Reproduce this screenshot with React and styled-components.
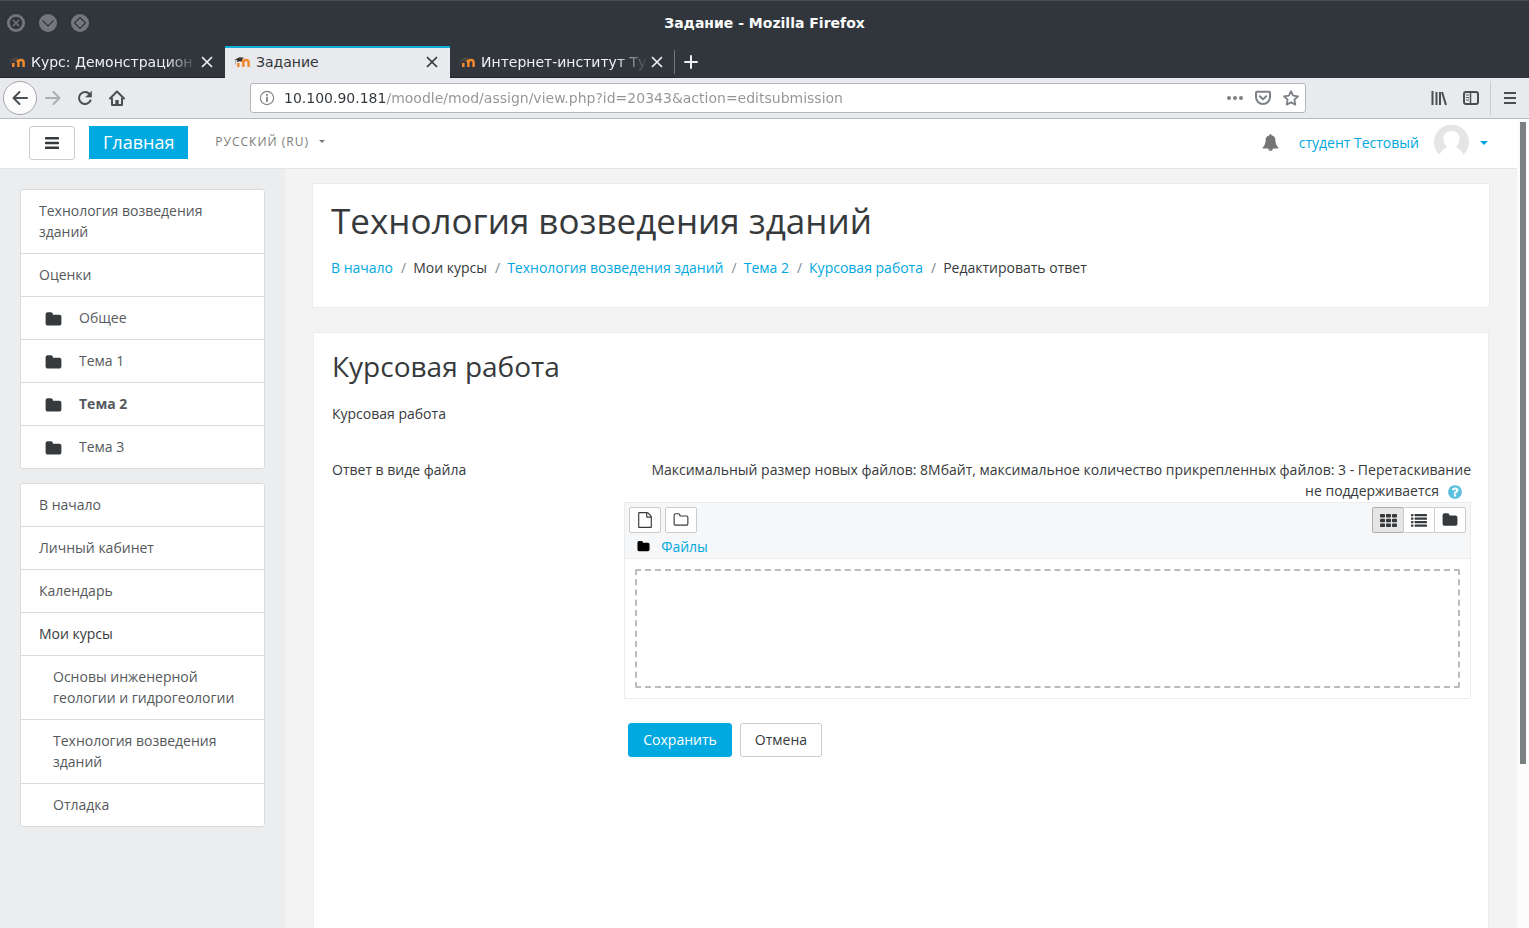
import React from "react";
import styled, { createGlobalStyle } from "styled-components";

const GlobalStyle = createGlobalStyle`
    * {
        box-sizing: border-box;
    }

    body {
        margin: 0;
        font-family: "Open Sans", "Noto Sans", sans-serif;
        font-size: 14px;
        line-height: 21px;
        color: #373a3c;
    }

    button, input {
        font: inherit;
        color: inherit;
    }

    a {
        color: #00a8df;
        text-decoration: none;
    }

    svg {
        display: block;
        flex: none;
    }
`;

const FA_PATHS = {
    folder: "M1728 608v704q0 92-66 158t-158 66h-1216q-92 0-158-66t-66-158v-960q0-92 66-158t158-66h320q92 0 158 66t66 158v32h672q92 0 158 66t66 158z",
    folderOpen: "M1600 1312v-704q0-40-28-68t-68-28h-704q-40 0-68-28t-28-68v-64q0-40-28-68t-68-28h-320q-40 0-68 28t-28 68v960q0 40 28 68t68 28h1216q40 0 68-28t28-68zm128-704v704q0 92-66 158t-158 66h-1216q-92 0-158-66t-66-158v-960q0-92 66-158t158-66h320q92 0 158 66t66 158v32h672q92 0 158 66t66 158z",
    file: "M1596 380q28 28 48 76t20 88v1152q0 40-28 68t-68 28h-1344q-40 0-68-28t-28-68v-1600q0-40 28-68t68-28h896q40 0 88 20t76 48zm-444-244v376h376q-10-29-22-41l-313-313q-12-12-41-22zm384 1528v-1024h-416q-40 0-68-28t-28-68v-416h-768v1536h1280z",
    bell: "M912 1696q0-16-16-16-59 0-101.500-42.500t-42.500-101.500q0-16-16-16t-16 16q0 73 51.500 124.500t124.500 51.500q16 0 16-16zm816-288q0 52-38 90t-90 38h-448q0 106-75 181t-181 75-181-75-75-181h-448q-52 0-90-38t-38-90q50-42 91-88t85-119.500 74.500-158.500 50-206 19.500-260q0-152 117-282.500t307-158.500q-8-19-8-39 0-40 28-68t68-28 68 28 28 68q0 20-8 39 190 28 307 158.500t117 282.500q0 139 19.500 260t50 206 74.500 158.500 85 119.500 91 88z",
    question: "M1024 1376v-192q0-14-9-23t-23-9h-192q-14 0-23 9t-9 23v192q0 14 9 23t23 9h192q14 0 23-9t9-23zm256-672q0-88-55.500-163t-138.500-116-170-41q-243 0-371 213-15 24 8 42l132 100q7 6 19 6 16 0 25-12 53-68 86-92 34-24 86-24 48 0 85.500 26t37.500 59q0 38-20 61t-68 45q-63 28-115.500 86.500t-52.500 125.500v36q0 14 9 23t23 9h192q14 0 23-9t9-23q0-19 21.500-49.500t54.500-49.500q32-18 49-28.500t46-35 44.500-48 28-60.500 12.500-81zm384 192q0 209-103 385.500t-279.500 279.500-385.500 103-385.500-103-279.500-279.500-103-385.500 103-385.500 279.500-279.500 385.500-103 385.500 103 279.500 279.500 103 385.500z",
};

const Fa = ({ name, size = 16 }) => (
    <svg width={size} height={size} viewBox="0 0 1792 1792" fill="currentColor" aria-hidden="true">
        <path d={FA_PATHS[name]} />
    </svg>
);

const Stroke = ({ children, width = 2, size = 16 }) => (
    <svg width={size} height={size} viewBox="0 0 16 16" fill="none" stroke="currentColor" strokeWidth={width} strokeLinecap="round" strokeLinejoin="round" aria-hidden="true">
        {children}
    </svg>
);

const BarsIcon = () => (
    <svg width="14" height="12" viewBox="0 0 14 12" fill="currentColor" aria-hidden="true">
        <rect y="0" width="14" height="2.400" rx=".4" />
        <rect y="4.800" width="14" height="2.400" rx=".4" />
        <rect y="9.600" width="14" height="2.400" rx=".4" />
    </svg>
);

const GridIcon = () => (
    <svg width="17" height="13" viewBox="0 0 17 13" fill="currentColor" aria-hidden="true">
        {[0, 6, 12].map((x) => [0, 4.75, 9.5].map((y) => (
            <rect key={`${x}-${y}`} x={x} y={y} width="5" height="3.500" rx=".8" />
        )))}
    </svg>
);

const ListIcon = () => (
    <svg width="16" height="13" viewBox="0 0 16 13" fill="currentColor" aria-hidden="true">
        {[0, 3.5, 7, 10.5].map((y) => (
            <g key={y}>
                <rect y={y} width="2.400" height="2.200" rx=".4" />
                <rect x="3.600" y={y} width="12.400" height="2.200" rx=".4" />
            </g>
        ))}
    </svg>
);

const MoodleIcon = ({ dark }) => (
    <svg width="16" height="16" viewBox="0 0 16 16" aria-hidden="true">
        <path d="M4.300 13V9M9.400 13V8.600Q9.400 6.400 6.800 6.400M9.400 13V8.600Q9.400 6 12 6Q14.600 6 14.600 8.600V13" fill="none" stroke="#f3892b" strokeWidth="2.500" />
        <path d="M.5 5.800L5.500 3.200L10 3.800L8 5.600L7.600 7.600Q5.500 6.600 3.400 8.200L3 6Z" fill={dark ? "#4a4442" : "#35322f"} />
        <path d="M1.600 5.800Q2 8 1.200 10.500" fill="none" stroke={dark ? "#594d45" : "#8a7f78"} strokeWidth=".7" />
    </svg>
);

const CloseIcon = () => (
    <Stroke width={1.7} size={16}>
        <path d="M3.500 3.500l9 9M12.500 3.500l-9 9" />
    </Stroke>
);

const WINDOW_BUTTONS = [
    { label: "Закрыть", art: <><circle cx="9" cy="9" r="6.200" fill="#31363c" /><path d="M6 6l6 6M12 6l-6 6" stroke="#74787c" strokeWidth="1.500" /></> },
    { label: "Свернуть", art: <path d="M3.500 6.500l5.500 5.500l5.500-5.500" stroke="#31363c" /> },
    { label: "Развернуть", art: <path d="M9 3.500l5.500 5.500l-5.500 5.500l-5.500-5.500z" stroke="#31363c" /> },
];

const TABS = [
    { title: "Курс: Демонстрацион" },
    { title: "Задание", active: true },
    { title: "Интернет-институт Ту" },
];

const COURSE_LINKS = [
    { text: "Технология возведения зданий" },
    { text: "Оценки" },
    { text: "Общее", folder: true },
    { text: "Тема 1", folder: true },
    { text: "Тема 2", folder: true, bold: true },
    { text: "Тема 3", folder: true },
];

const SITE_LINKS = [
    { text: "В начало" },
    { text: "Личный кабинет" },
    { text: "Календарь" },
    { text: "Мои курсы", dark: true },
    { text: "Основы инженерной геологии и гидрогеологии", nested: true },
    { text: "Технология возведения зданий", nested: true },
    { text: "Отладка", nested: true },
];

const CRUMBS = [
    { text: "В начало", link: true },
    { text: "Мои курсы" },
    { text: "Технология возведения зданий", link: true },
    { text: "Тема 2", link: true },
    { text: "Курсовая работа", link: true },
    { text: "Редактировать ответ" },
];

const SideMenu = ({ links, label }) => (
    <MenuCard aria-label={label}>
        {links.map((link) => (
            <MenuLink key={link.text} href="#" $nested={link.nested} $bold={link.bold} $dark={link.dark}>
                {link.folder && <MenuIcon><Fa name="folder" size={17} /></MenuIcon>}
                <span>{link.text}</span>
            </MenuLink>
        ))}
    </MenuCard>
);

const BrowserChrome = () => (
    <Chrome>
        <TitleBar>
            <WindowButtons>
                {WINDOW_BUTTONS.map((b) => (
                    <PlainButton key={b.label} aria-label={b.label}>
                        <svg width="18" height="18" viewBox="0 0 18 18" fill="none" strokeWidth="1.200">
                            <circle cx="9" cy="9" r="9" fill="#74787c" />
                            {b.art}
                        </svg>
                    </PlainButton>
                ))}
            </WindowButtons>
            <WindowTitle>Задание - Mozilla Firefox</WindowTitle>
        </TitleBar>
        <TabStrip>
            {TABS.map((tab) => (
                <Tab key={tab.title} $active={tab.active}>
                    <MoodleIcon dark={!tab.active} />
                    <TabTitle $fade={!tab.active}>{tab.title}</TabTitle>
                    <PlainButton aria-label="Закрыть вкладку"><CloseIcon /></PlainButton>
                </Tab>
            ))}
            <NewTab aria-label="Новая вкладка">
                <Stroke><path d="M8 2v12M2 8h12" /></Stroke>
            </NewTab>
        </TabStrip>
        <NavBar>
            <NavGroup>
                <BackButton aria-label="Назад">
                    <Stroke><path d="M15 8H1.500M7.500 2L1.500 8l6 6" /></Stroke>
                </BackButton>
                <NavButton aria-label="Вперёд" $muted>
                    <Stroke><path d="M1 8h13.500M8.500 2l6 6l-6 6" /></Stroke>
                </NavButton>
                <NavButton aria-label="Обновить">
                    <Stroke>
                        <path d="M13.500 10.500A6 6 0 1 1 12.500 4" />
                        <path d="M14.500 1.500v5.500h-5.500z" fill="currentColor" strokeWidth=".6" />
                    </Stroke>
                </NavButton>
                <NavButton aria-label="Домой">
                    <Stroke>
                        <path d="M1 8.500L8 1.500l7 7M3 8.500V15h10V8.500" />
                        <path d="M8 14v-4" strokeWidth="3.400" strokeLinecap="butt" />
                    </Stroke>
                </NavButton>
            </NavGroup>
            <UrlBar>
                <Stroke width={1.1}>
                    <circle cx="8" cy="8" r="6.600" />
                    <path d="M8 7.500v3.800M8 4.700v.4" strokeWidth="1.800" />
                </Stroke>
                <UrlInput aria-label="Адрес" defaultValue="10.100.90.181/moodle/mod/assign/view.php?id=20343&action=editsubmission" />
                <PlainButton aria-label="Действия">
                    <svg width="16" height="16" viewBox="0 0 16 16" fill="currentColor"><circle cx="2" cy="8" r="2" /><circle cx="8" cy="8" r="2" /><circle cx="14" cy="8" r="2" /></svg>
                </PlainButton>
                <PlainButton aria-label="Pocket">
                    <Stroke><path d="M2 1.800h12q1 0 1 1V7a7 7 0 0 1-14 0V2.800q0-1 1-1zM4.800 6.200L8 9.400l3.200-3.200" /></Stroke>
                </PlainButton>
                <PlainButton aria-label="В закладки">
                    <Stroke width={1.8}><path d="M8 1.200l2.100 4.500 4.900.6-3.600 3.400.9 4.900L8 12.200l-4.300 2.400.9-4.900L1 6.300l4.900-.6z" /></Stroke>
                </PlainButton>
            </UrlBar>
            <ToolGroup>
                <PlainButton aria-label="Библиотека">
                    <Stroke><path d="M1.500 1v14M5.500 2v13M9 2v13M11 2l4 13" strokeLinecap="butt" /></Stroke>
                </PlainButton>
                <PlainButton aria-label="Боковая панель">
                    <Stroke><rect x="1" y="2" width="14" height="12" rx="2" /><path d="M7.500 2v12" strokeWidth="1.500" /><path d="M3.500 5h2M3.500 7.500h2M3.500 10h2" strokeWidth="1" /></Stroke>
                </PlainButton>
                <MenuButton aria-label="Меню">
                    <Stroke><path d="M2 3h12M2 8h12M2 13h12" strokeLinecap="butt" /></Stroke>
                </MenuButton>
            </ToolGroup>
        </NavBar>
    </Chrome>
);

const FileManager = () => (
    <Manager>
        <ManagerTop>
            <ManagerTools>
                <ToolButton aria-label="Добавить файл"><Fa name="file" size={16} /></ToolButton>
                <ToolButton aria-label="Создать папку"><Fa name="folderOpen" size={16} /></ToolButton>
                <ViewGroup>
                    <ViewButton aria-label="Значки" $active><GridIcon /></ViewButton>
                    <ViewButton aria-label="Список"><ListIcon /></ViewButton>
                    <ViewButton aria-label="Дерево"><Fa name="folder" size={16} /></ViewButton>
                </ViewGroup>
            </ManagerTools>
            <ManagerPath>
                <Fa name="folder" size={13} />
                <a href="#">Файлы</a>
            </ManagerPath>
        </ManagerTop>
        <DropZone />
    </Manager>
);

export default function App() {
    return (
        <Window>
            <GlobalStyle />
            <BrowserChrome />
            <Viewport>
                <Page>
                    <SiteHeader>
                        <Hamburger aria-label="Меню сайта"><BarsIcon /></Hamburger>
                        <HomeLink href="#">Главная</HomeLink>
                        <Language>Русский (ru)<Caret /></Language>
                        <UserMenu>
                            <BellButton aria-label="Уведомления"><Fa name="bell" size={17} /></BellButton>
                            <a href="#">студент Тестовый</a>
                            <AvatarButton aria-label="Меню пользователя">
                                <svg width="35" height="35" viewBox="0 0 35 35">
                                    <path d="M5.500 29.800A17.500 17.500 0 1 1 29.500 29.800Q27.500 24.500 22 22Q25.500 18.500 25.500 14Q25.500 6 17.500 6T9.500 14Q9.500 18.500 13 22Q7.500 24.500 5.500 29.800Z" fill="#e5e5e5" />
                                </svg>
                                <Caret $big />
                            </AvatarButton>
                        </UserMenu>
                    </SiteHeader>
                    <Body>
                        <Sidebar>
                            <SideMenu links={COURSE_LINKS} label="Курс" />
                            <SideMenu links={SITE_LINKS} label="Навигация" />
                        </Sidebar>
                        <Content>
                            <HeadCard>
                                <CourseTitle>Технология возведения зданий</CourseTitle>
                                <Crumbs>
                                    {CRUMBS.map((c) => (
                                        <li key={c.text}>{c.link ? <a href="#">{c.text}</a> : c.text}</li>
                                    ))}
                                </Crumbs>
                            </HeadCard>
                            <MainCard>
                                <TaskTitle>Курсовая работа</TaskTitle>
                                <Intro>Курсовая работа</Intro>
                                <FormRow>
                                    <LabelCol>Ответ в виде файла</LabelCol>
                                    <FieldCol>
                                        <Limits>
                                            Максимальный размер новых файлов: 8Мбайт, максимальное количество прикрепленных файлов: 3 - Перетаскивание не поддерживается
                                            <HelpButton aria-label="Справка"><Fa name="question" size={16} /></HelpButton>
                                        </Limits>
                                        <FileManager />
                                        <Actions>
                                            <SubmitButton $primary>Сохранить</SubmitButton>
                                            <SubmitButton>Отмена</SubmitButton>
                                        </Actions>
                                    </FieldCol>
                                </FormRow>
                            </MainCard>
                        </Content>
                    </Body>
                </Page>
                <ScrollTrack><ScrollThumb /></ScrollTrack>
            </Viewport>
        </Window>
    );
}

const Window = styled.div`
    display: flex;
    flex-direction: column;
    height: 100vh;
    overflow: hidden;
    background: #fff;
`;

const Chrome = styled.header`
    flex: none;
    font-family: "DejaVu Sans", sans-serif;
    font-size: 14px;
    line-height: 20px;
`;

const PlainButton = styled.button`
    display: flex;
    align-items: center;
    padding: 0;
    border: 0;
    background: none;
`;

const TitleBar = styled.div`
    display: grid;
    grid-template-columns: 1fr auto 1fr;
    align-items: center;
    height: 46px;
    padding: 0 7px 2px;
    border-top: 1px solid #474c52;
    background: #31363d;
    color: #fcfcfc;
`;

const WindowButtons = styled.div`
    display: flex;
    gap: 14px;
`;

const WindowTitle = styled.div`
    font-weight: bold;
`;

const TabStrip = styled.div`
    display: flex;
    height: 32px;
    background: #31363d;
    color: #eff0f1;
`;

const Tab = styled.div`
    display: flex;
    align-items: center;
    gap: 6px;
    width: 225px;
    padding: 0 10px 2px 9px;
    border-top: 2px solid ${(props) => (props.$active ? "#12aeda" : "transparent")};
    border-bottom: 1px solid ${(props) => (props.$active ? "#e9eaed" : "#1f2226")};
    background: ${(props) => (props.$active ? "#e9eaed" : "transparent")};
    color: ${(props) => (props.$active ? "#31363b" : "inherit")};
`;

const TabTitle = styled.span`
    flex: 1;
    min-width: 0;
    margin-right: -5px;
    overflow: hidden;
    white-space: nowrap;
    ${(props) => props.$fade && "mask-image: linear-gradient(to left, transparent, #000 32px);"}
`;

const NewTab = styled(PlainButton)`
    height: 24px;
    margin: 4px 0 0 -1px;
    padding-left: 8px;
    border-left: 1px solid #72767a;
`;

const NavBar = styled.div`
    display: flex;
    align-items: center;
    height: 41px;
    padding: 0 11px 0 3px;
    border-bottom: 1px solid #b7b9bc;
    background: #e9eaed;
    color: #494e53;
`;

const NavGroup = styled.div`
    display: flex;
    align-items: center;
    gap: 16px;
    width: 247px;
`;

const NavButton = styled(PlainButton)`
    color: ${(props) => (props.$muted ? "#acafb2" : "inherit")};
`;

const BackButton = styled(PlainButton)`
    justify-content: center;
    width: 34px;
    height: 34px;
    margin-right: -8px;
    border: 1px solid #a5a8ab;
    border-radius: 50%;
    background: #fcfcfc;
`;

const UrlBar = styled.div`
    display: flex;
    align-items: center;
    gap: 12px;
    flex: 1;
    height: 30px;
    padding: 0 6px 0 8px;
    border: 1px solid #b4b6b9;
    border-radius: 3px;
    background: #fff;
    color: #7d8185;
`;

const UrlInput = styled.input`
    flex: 1;
    min-width: 0;
    margin-left: -3px;
    padding: 0;
    border: 0;
    outline: 0;
    background: linear-gradient(90deg, #31363b 102px, #919497 102px);
    background-clip: text;
    -webkit-background-clip: text;
    color: transparent;
`;

const ToolGroup = styled.div`
    display: flex;
    align-items: center;
    gap: 16px;
    margin-left: 125px;
`;

const MenuButton = styled(PlainButton)`
    height: 34px;
    margin-left: -5px;
    padding-left: 11px;
    border-left: 1px solid #c8cacd;
`;

const Viewport = styled.div`
    display: flex;
    flex: 1;
    min-height: 0;
`;

const Page = styled.div`
    display: flex;
    flex-direction: column;
    flex: 1;
    min-width: 0;
    overflow: hidden;
`;

const ScrollTrack = styled.div`
    width: 12px;
    padding: 3px;
    background: #fcfcfc;
`;

const ScrollThumb = styled.div`
    height: 80%;
    background: #7b8083;
`;

const SiteHeader = styled.header`
    display: flex;
    align-items: center;
    flex: none;
    height: 50px;
    padding: 0 29px 2px 29px;
    border-bottom: 1px solid #e3e4e6;
    background: #fff;
`;

const Hamburger = styled.button`
    display: flex;
    align-items: center;
    justify-content: center;
    width: 46px;
    height: 34px;
    padding: 0;
    border: 1px solid #ccc;
    border-radius: 3px;
    background: #fff;
`;

const HomeLink = styled.a`
    margin: 0 27px 0 14px;
    padding: 6px 14px;
    background: #00a9e0;
    color: #fff;
    font-size: 18px;
`;

const Language = styled.button`
    display: flex;
    align-items: center;
    gap: 10px;
    padding: 0 0 2px;
    border: 0;
    background: none;
    color: #7a7a7a;
    font-size: 12px;
    letter-spacing: 1px;
    text-transform: uppercase;
`;

const Caret = styled.span`
    border: ${(props) => (props.$big ? 4 : 3)}px solid transparent;
    border-top-color: currentColor;
    border-bottom: 0;
`;

const UserMenu = styled.div`
    display: flex;
    align-items: center;
    margin-left: auto;
`;

const BellButton = styled(PlainButton)`
    margin-right: 20px;
    color: #757575;
`;

const AvatarButton = styled(PlainButton)`
    gap: 11px;
    margin-left: 15px;
    color: #00a8df;
`;

const Body = styled.div`
    display: flex;
    flex: 1;
    min-height: 0;
`;

const Sidebar = styled.aside`
    display: flex;
    flex-direction: column;
    gap: 14px;
    flex: none;
    width: 285px;
    padding: 20px;
    background: #ebedef;
`;

const MenuCard = styled.nav`
    flex: none;
    border: 1px solid #d9dbdd;
    border-radius: 3px;
    background: #fff;
`;

const MenuLink = styled.a`
    display: flex;
    padding: 10px 18px 11px ${(props) => (props.$nested ? 32 : 18)}px;
    color: ${(props) => (props.$dark ? "#373a3c" : "#55595c")};
    font-weight: ${(props) => (props.$bold ? 700 : 400)};

    & + & {
        border-top: 1px solid #d9dbdd;
    }
`;

const MenuIcon = styled.span`
    display: flex;
    align-items: center;
    width: 40px;
    padding: 4px 0 0 6px;
    color: #373a3c;
`;

const Content = styled.main`
    display: flex;
    flex-direction: column;
    gap: 24px;
    flex: 1;
    min-width: 0;
    padding: 14px 27px 0;
    background: #f3f3f3;
`;

const Card = styled.section`
    border: 1px solid #ececec;
    background: #fff;
`;

const HeadCard = styled(Card)`
    padding: 17px 18px 29px;
`;

const MainCard = styled(Card)`
    flex: 1;
    min-height: 0;
    margin: 0 1px;
    padding: 16px 17px 0 18px;
    border-bottom: 0;
`;

const CourseTitle = styled.h1`
    margin: 0 0 16px;
    font-size: 35px;
    font-weight: 400;
    line-height: 40px;
`;

const TaskTitle = styled.h2`
    margin: 0 0 20px;
    font-size: 28px;
    font-weight: 400;
    line-height: 34px;
`;

const Crumbs = styled.ol`
    display: flex;
    flex-wrap: wrap;
    margin: 0;
    padding: 0;
    list-style: none;

    li + li::before {
        content: "/";
        padding: 0 7px 0 8px;
        color: #818a91;
    }
`;

const Intro = styled.p`
    margin: 0 0 35px;
`;

const FormRow = styled.form`
    display: flex;
    margin: 0 -15px;
`;

const LabelCol = styled.div`
    flex: 0 0 25%;
    padding: 0 15px;
`;

const FieldCol = styled.div`
    flex: 1;
    min-width: 0;
    padding: 0 15px;
`;

const Limits = styled.div`
    padding: 0 0 1px 14px;
    text-align: right;
`;

const HelpButton = styled.button`
    margin: 0 8px;
    padding: 0;
    border: 0;
    background: none;
    color: #5bc0de;
    line-height: 16px;
    vertical-align: middle;
`;

const Manager = styled.div`
    border: 1px solid #ececec;
`;

const ManagerTop = styled.div`
    padding: 4px 4px 1px;
    border-bottom: 1px solid #ececec;
    background: #f6f7f9;
`;

const ManagerTools = styled.div`
    display: flex;
    gap: 4px;
`;

const ToolButton = styled.button.attrs({ type: "button" })`
    display: flex;
    align-items: center;
    justify-content: center;
    width: 32px;
    height: 26px;
    padding: 0;
    border: 1px solid #ccc;
    border-radius: 2px;
    background: #fff;
`;

const ViewGroup = styled.div`
    display: flex;
    margin-left: auto;
`;

const ViewButton = styled(ToolButton)`
    border-color: ${(props) => (props.$active ? "#adadad" : "#ccc")};
    background: ${(props) => (props.$active ? "#e6e6e6" : "#fff")};

    & + & {
        margin-left: -1px;
    }
`;

const ManagerPath = styled.div`
    display: flex;
    align-items: center;
    gap: 11px;
    padding: 3px 8px 0;
    color: #000;
`;

const DropZone = styled.div`
    height: 119px;
    margin: 10px;
    border: 2px dashed #bbb;
    border-radius: 2px;
`;

const Actions = styled.div`
    display: flex;
    gap: 8px;
    padding: 24px 4px;
`;

const SubmitButton = styled.button.attrs({ type: "button" })`
    height: 34px;
    padding: 0 14px 2px;
    border: 1px solid ${(props) => (props.$primary ? "#00a9e0" : "#ccc")};
    border-radius: 3px;
    background: ${(props) => (props.$primary ? "#00a9e0" : "#fff")};
    color: ${(props) => (props.$primary ? "#fff" : "#373a3c")};
`;
